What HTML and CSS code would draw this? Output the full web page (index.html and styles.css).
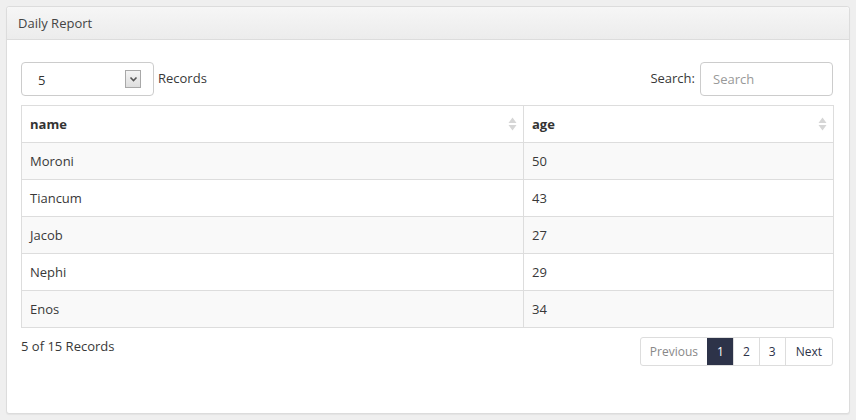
FILE: index.html
```html
<!DOCTYPE html>
<html>
<head>
<meta charset="utf-8">
<link rel="stylesheet" href="styles.css">
</head>
<body>
<div class="panel">
  <div class="panel-heading">Daily Report</div>
  <div class="panel-body">
    <div class="toolbar">
      <div class="length">
        <div class="select">
          <span class="select-value">5</span>
          <span class="select-arrow">
            <svg width="9" height="6" viewBox="0 0 9 6"><path d="M1.5 1.5 L4.5 4.5 L7.5 1.5" fill="none" stroke="#555" stroke-width="1.6"/></svg>
          </span>
        </div>
        <span class="length-label">Records</span>
      </div>
      <div class="search">
        <label class="search-label">Search:</label>
        <input class="search-input" type="text" placeholder="Search">
      </div>
    </div>
    <table class="grid">
      <thead>
        <tr>
          <th class="col-name"><span>name</span><span class="sort"><svg width="9" height="14" viewBox="0 0 9 14"><path d="M4.5 0.5 L8.5 6 L0.5 6 Z M0.5 8 L8.5 8 L4.5 13.5 Z" fill="#d6d6d6"/></svg></span></th>
          <th><span>age</span><span class="sort"><svg width="9" height="14" viewBox="0 0 9 14"><path d="M4.5 0.5 L8.5 6 L0.5 6 Z M0.5 8 L8.5 8 L4.5 13.5 Z" fill="#d6d6d6"/></svg></span></th>
        </tr>
      </thead>
      <tbody>
        <tr class="odd"><td>Moroni</td><td>50</td></tr>
        <tr><td>Tiancum</td><td>43</td></tr>
        <tr class="odd"><td>Jacob</td><td>27</td></tr>
        <tr><td>Nephi</td><td>29</td></tr>
        <tr class="odd"><td>Enos</td><td>34</td></tr>
      </tbody>
    </table>
    <div class="footer">
      <div class="info">5 of 15 Records</div>
      <ul class="pagination">
        <li class="muted">Previous</li>
        <li class="active num">1</li>
        <li class="num">2</li>
        <li class="num">3</li>
        <li>Next</li>
      </ul>
    </div>
  </div>
</div>
</body>
</html>
```

FILE: styles.css
```css
html, body {
  margin: 0;
  padding: 0;
}
body {
  background: #efefef;
  font-family: "Open Sans", "Noto Sans", sans-serif;
  font-size: 13px;
  color: #383838;
  padding: 6px 6px 6px 6px;
}
.panel {
  width: 844px;
  height: 408px;
  box-sizing: border-box;
  background: #fff;
  border: 1px solid #dcdcdc;
  border-radius: 3px;
  box-shadow: 0 1px 1px rgba(0,0,0,0.05);
}
.panel-heading {
  height: 33px;
  box-sizing: border-box;
  padding: 7px 11px;
  background: linear-gradient(#f6f6f6, #ececec);
  border-bottom: 1px solid #dcdcdc;
  border-radius: 3px 3px 0 0;
  color: #444;
  line-height: 18px;
}
.panel-body {
  padding: 22px 14px 0 14px;
}
.toolbar {
  display: flex;
  justify-content: space-between;
  align-items: center;
  height: 34px;
}
.length {
  display: flex;
  align-items: center;
}
.select {
  width: 133px;
  height: 34px;
  box-sizing: border-box;
  border: 1px solid #ccc;
  border-radius: 4px;
  display: flex;
  align-items: center;
  justify-content: space-between;
  padding: 0 12px 0 16px;
}
.select-value {
  color: #333;
  padding-top: 2px;
}
.select-arrow {
  width: 16px;
  height: 18px;
  box-sizing: border-box;
  border: 1px solid #a8a8a8;
  background: linear-gradient(#f4f4f4, #dedede);
  display: flex;
  align-items: center;
  justify-content: center;
}
.length-label {
  margin-left: 4px;
  margin-bottom: 3px;
}
.search {
  display: flex;
  align-items: center;
  margin-right: 2px;
}
.search-label {
  margin-right: 5px;
  margin-bottom: 3px;
}
.search-input {
  width: 133px;
  height: 34px;
  box-sizing: border-box;
  border: 1px solid #ccc;
  border-radius: 4px;
  padding: 0 12px;
  font-family: inherit;
  font-size: 13px;
  color: #333;
  outline: none;
}
.search-input::placeholder {
  color: #999;
}
.grid {
  margin-top: 9px;
  width: 813px;
  border-collapse: collapse;
  border: 1px solid #ddd;
}
.grid th, .grid td {
  border: 1px solid #ddd;
  height: 37px;
  box-sizing: border-box;
  padding: 0 8px;
  text-align: left;
  vertical-align: middle;
}
.grid th {
  font-weight: bold;
  color: #333;
}
.grid th .sort {
  float: right;
  display: flex;
  height: 18px;
  align-items: center;
  margin-right: -2px;
}
.grid th.col-name {
  width: 502px;
}
.grid tr.odd td {
  background: #f9f9f9;
}
.footer {
  display: flex;
  justify-content: space-between;
  align-items: flex-start;
  margin-top: 9px;
}
.info {
  line-height: 18px;
}
.pagination {
  list-style: none;
  margin: 0 2px 0 0;
  padding: 0;
  display: flex;
  border: 1px solid #ddd;
  border-radius: 3px;
}
.pagination li {
  height: 27px;
  box-sizing: border-box;
  line-height: 27px;
  padding: 0 10px;
  font-size: 12px;
  color: #2d3349;
  border-left: 1px solid #ddd;
}
.pagination li.num {
  padding: 0 9px;
}
.pagination li:first-child {
  border-left: none;
  padding: 0 9px;
}
.pagination li.muted {
  color: #888;
}
.pagination li.active {
  background: #2d3349;
  color: #fff;
  border-left-color: #2d3349;
}
```
